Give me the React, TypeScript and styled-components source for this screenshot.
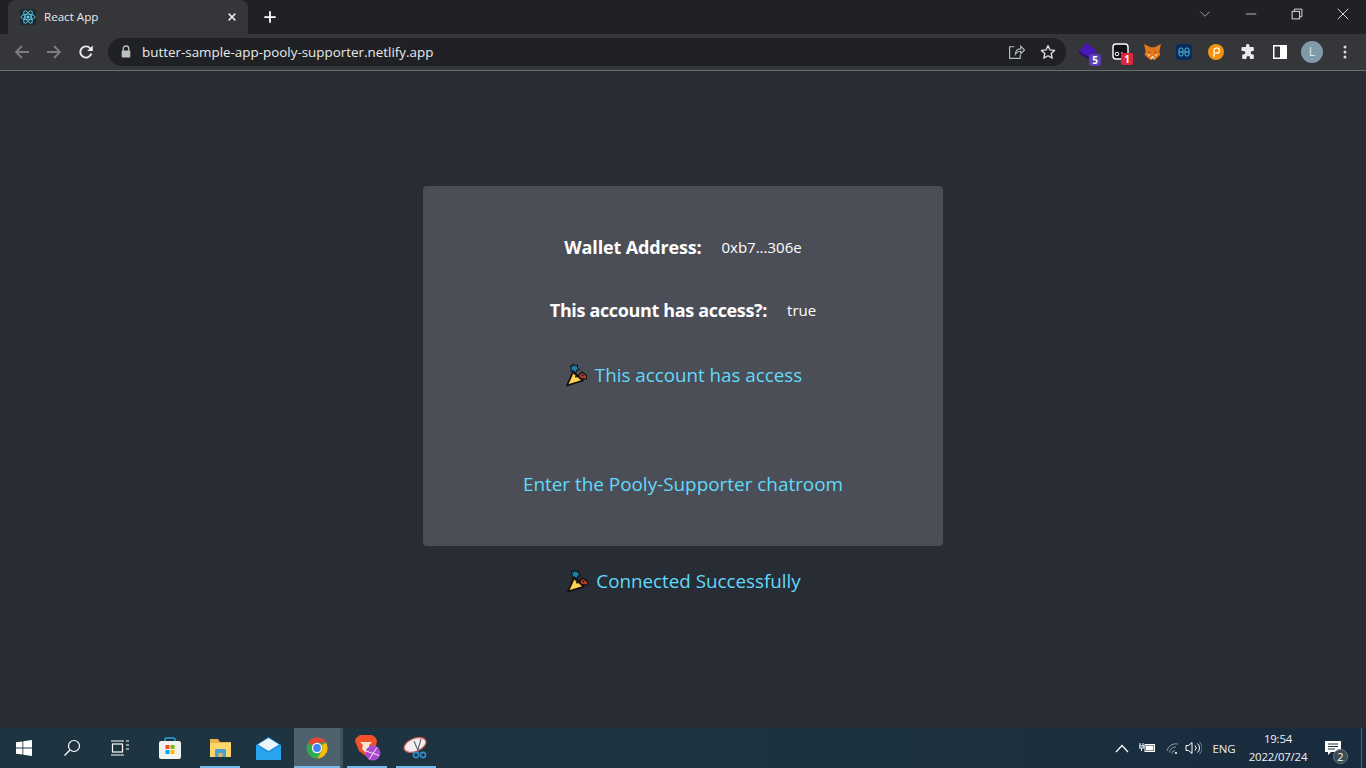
import React from "react";
import styled, { createGlobalStyle } from "styled-components";

const UI = `"Open Sans", "Noto Sans", "Liberation Sans", sans-serif`;

const Global = createGlobalStyle`
  html, body { margin: 0; padding: 0; background: #282c34; overflow: hidden; }
  * { box-sizing: border-box; }
  #root { width: 1366px; height: 768px; }
`;

const Screen = styled.div`
  width: 1366px; height: 768px; display: flex; flex-direction: column; font-family: ${UI};
`;
const TabStrip = styled.header`
  height: 34px; background: #202124; display: flex; align-items: flex-end; padding-left: 8px;
`;
const Tab = styled.div`
  width: 240px; height: 34px; background: #35363a; border-radius: 8px 8px 0 0; display: flex; align-items: center;
  padding: 0 8px 1px 12px; color: #e8eaed; font-size: 11.6px; gap: 8px;
`;
const TabTitle = styled.span`flex: 1; white-space: nowrap;`;
const IconSlot = styled.span<{ $w?: number }>`
  width: ${(p) => p.$w ?? 32}px; flex: none; display: flex; align-items: center; justify-content: center; position: relative;
`;
const NewTab = styled.div`margin-left: 6px; width: 32px; height: 34px; display: flex; align-items: center; justify-content: center;`;
const Spacer = styled.div`flex: 1;`;
const WindowControls = styled.div`display: flex; align-self: flex-start; align-items: center;`;
const WinBtn = styled.div`width: 46px; height: 28px; display: flex; align-items: center; justify-content: center;`;

const Toolbar = styled.div`
  height: 37px; background: #35363a; border-bottom: 1px solid #6b6d70; display: flex; align-items: center; padding-left: 6px; padding-bottom: 1px;
`;
const Omnibox = styled.div`
  margin-left: 6px; width: 958px; height: 28px; border-radius: 14px; background: #202124; display: flex; align-items: center; padding: 0 2px 0 12px; color: #e8eaed;
`;
const Url = styled.span`flex: 1; margin-left: 10px; font-size: 13.4px; white-space: nowrap; position: relative; top: 0.5px;`;
const Extensions = styled.div`margin-left: 6px; display: flex; align-items: center;`;
const Badge = styled.span<{ $bg: string }>`
  position: absolute; right: 3px; bottom: -5px; width: 12px; height: 12px; border-radius: 2px; background: ${(p) => p.$bg}; color: #fff;
  font-size: 10px; font-weight: 700; line-height: 12px; text-align: center;
`;
const Avatar = styled.div`
  width: 22px; height: 22px; border-radius: 50%; background: #7f9aa8; color: #dfe7ec; font-size: 12px; line-height: 22px; text-align: center;
`;

const Page = styled.main`
  flex: 1; background: #282c34; display: flex; flex-direction: column; align-items: center; padding-top: 115px; color: #fff;
`;
const Card = styled.section`
  width: 520px; height: 360px; background: #4b4e57; border-radius: 4px; display: flex; flex-direction: column; align-items: center; padding-top: 47px;
`;
const InfoRow = styled.div`
  height: 28px; display: flex; align-items: center; gap: 20px; margin-bottom: 35px;
`;
const InfoLabel = styled.span<{ $track: number }>`
  font-size: 18px; font-weight: 700; letter-spacing: ${(p) => p.$track}px; white-space: nowrap;
`;
const InfoValue = styled.span`font-size: 15px; white-space: nowrap;`;
const Status = styled.div`
  display: flex; align-items: center; gap: 8px; height: 28px; color: #61dafb; font-size: 18.8px; white-space: nowrap; margin-top: 2px;
`;
const RoomLink = styled.a`
  margin-top: 81px; height: 28px; line-height: 28px; color: #61dafb; font-size: 18.9px; white-space: nowrap;
`;
const Connected = styled(Status)`margin-top: 21px;`;

const Taskbar = styled.footer`
  height: 40px; background: linear-gradient(90deg, #1e3440 0%, #1d3340 50%, #192b3e 100%); display: flex; align-items: stretch; color: #fff;
`;
const TaskBtn = styled.div<{ $w?: number; $open?: boolean; $active?: boolean }>`
  width: ${(p) => p.$w ?? 48}px; flex: none; display: flex; align-items: center; justify-content: center; position: relative;
  background: ${(p) => (p.$active ? "#4d626c" : "transparent")};
  &::after {
    content: ""; display: ${(p) => (p.$open ? "block" : "none")}; position: absolute; bottom: 0;
    left: ${(p) => (p.$active ? 0 : 4)}px; right: ${(p) => (p.$active ? 0 : 4)}px; height: 2px; background: #76b9ed;
  }
`;
const TaskGap = styled.div<{ $w: number }>`width: ${(p) => p.$w}px; flex: none;`;
const TaskDivider = styled.div`width: 3px; flex: none; background: #40535d;`;
const Tray = styled.div`margin-left: auto; display: flex; align-items: center; padding-right: 13px; position: relative;`;
const TrayLabel = styled.span`width: 43px; padding-left: 5px; text-align: center; font-size: 11.4px; color: #e8eef2;`;
const Clock = styled.div`
  width: 70px; text-align: center; font-size: 11.4px; line-height: 18px; color: #eef2f4; letter-spacing: -0.2px; white-space: nowrap;
`;
const ClockLine = styled.div`height: 18px;`;
const Notif = styled.div`width: 40px; height: 40px; display: flex; align-items: center; justify-content: center; position: relative;`;
const NotifCount = styled.span`
  position: absolute; left: 20px; top: 21px; width: 15px; height: 15px; border-radius: 50%; background: #3c4a52; border: 1px solid #6b7a83; color: #fff;
  font-size: 11px; line-height: 13px; text-align: center;
`;
const EdgeLine = styled.div`width: 1px; background: #50626d; position: absolute; right: 4px; top: 0; bottom: 0;`;

const Stroke: React.FC<React.SVGProps<SVGSVGElement> & { s?: number }> = ({ s = 16, children, ...r }) => (
  <svg width={s} height={s} viewBox="0 0 16 16" fill="none" stroke="currentColor" strokeWidth={1.5} {...r}>{children}</svg>
);

const ReactLogo = () => (
  <svg width="16" height="16" viewBox="0 0 16 16">
    <rect width="16" height="16" rx="1" fill="#1f2a30" />
    <g fill="none" stroke="#61dafb" strokeWidth="0.8">
      <ellipse cx="8" cy="8" rx="7" ry="2.8" />
      <ellipse cx="8" cy="8" rx="7" ry="2.8" transform="rotate(60 8 8)" />
      <ellipse cx="8" cy="8" rx="7" ry="2.8" transform="rotate(120 8 8)" />
    </g>
    <circle cx="8" cy="8" r="1.5" fill="#61dafb" />
  </svg>
);

const Popper = () => (
  <svg width="23" height="24" viewBox="0 0 23 24">
    <path d="M3 22.500 L9 9 L19 17.500 Z" fill="#f9b93c" stroke="#0d0d0d" strokeWidth="1.700" strokeLinejoin="round" />
    <path d="M5.500 20 L9.500 12 L15.500 17.500 Z" fill="#fcd25a" />
    <path transform="translate(-3 -1)" d="M12 1.800 L14 3.500 L16.800 3 L16.300 5.300 L18.500 7.500 L15.800 8 L14.800 11 L12.500 8.800 L9.800 9.300 L10.300 6.500 L9.200 3.500 L12 4.200 Z" fill="#1d7fa6" stroke="#0d0d0d" strokeWidth="1" />
    <path d="M14 13 L18 9 L22.500 12.500 L22.800 16 L17 15.500 Z" fill="#b5432c" stroke="#0d0d0d" strokeWidth="1.100" />
    <circle cx="12" cy="13.500" r="1" fill="#0d0d0d" />
    <circle cx="18.500" cy="12.500" r="0.900" fill="#0d0d0d" />
  </svg>
);

const Chrome = () => (
  <svg width="22" height="22" viewBox="0 0 24 24">
    <circle cx="12" cy="12" r="11.500" fill="#34a853" />
    <path d="M12 .5a11.500 11.500 0 0 1 10 5.800H12A5.700 5.700 0 0 0 7 9.300L2.100 6.200A11.500 11.500 0 0 1 12 .5z" fill="#ea4335" />
    <path d="M22 6.300A11.500 11.500 0 0 1 12.500 23.500l4.400-8.300A5.700 5.700 0 0 0 17 9z" fill="#fbbc05" />
    <circle cx="12" cy="12" r="5.600" fill="#fff" />
    <circle cx="12" cy="12" r="4.300" fill="#4285f4" />
  </svg>
);

const App: React.FC = () => (
  <Screen>
    <Global />
    <TabStrip>
      <Tab>
        <ReactLogo />
        <TabTitle>React App</TabTitle>
        <IconSlot $w={16}>
          <Stroke s={12} strokeWidth={2} style={{ color: "#e8eaed" }}><path d="M3.500 3.500l9 9M12.500 3.500l-9 9" /></Stroke>
        </IconSlot>
      </Tab>
      <NewTab>
        <Stroke s={14} style={{ color: "#fff" }} strokeWidth={2}><path d="M8 1.500v13M1.500 8h13" /></Stroke>
      </NewTab>
      <Spacer />
      <WindowControls>
        <WinBtn>
          <Stroke s={12} style={{ color: "#c8cacc" }} strokeWidth={1}><path d="M2 5l6 6 6-6" /></Stroke>
        </WinBtn>
        <WinBtn>
          <Stroke s={12} style={{ color: "#e8eaed" }} strokeWidth={1}><path d="M1 8h14" /></Stroke>
        </WinBtn>
        <WinBtn>
          <Stroke s={12} style={{ color: "#e8eaed" }} strokeWidth={1.2}><rect x="1.500" y="4.500" width="10" height="10" /><path d="M4.500 4V1.500h10v10H12" /></Stroke>
        </WinBtn>
        <WinBtn>
          <Stroke s={12} style={{ color: "#e8eaed" }} strokeWidth={1.2}><path d="M1 1l14 14M15 1L1 15" /></Stroke>
        </WinBtn>
      </WindowControls>
    </TabStrip>
    <Toolbar>
      <IconSlot>
        <Stroke style={{ color: "#7c7e81" }} strokeWidth={1.8}><path d="M15 8H2M8 2L2 8l6 6" /></Stroke>
      </IconSlot>
      <IconSlot>
        <Stroke style={{ color: "#7c7e81" }} strokeWidth={1.8}><path d="M1 8h13M8 2l6 6-6 6" /></Stroke>
      </IconSlot>
      <IconSlot>
        <Stroke style={{ color: "#e8eaed" }} strokeWidth={1.9}>
          <path d="M13.300 9.600A5.600 5.600 0 1 1 12 4.100L13.800 6" />
          <path d="M14.800 1.400v5.600H9.200z" fill="currentColor" stroke="none" />
        </Stroke>
      </IconSlot>
      <Omnibox>
        <svg width="12" height="13" viewBox="0 0 12 13"><path d="M3.200 6V3.800a2.800 2.800 0 0 1 5.600 0V6" fill="none" stroke="#bdc1c6" strokeWidth="1.300" /><rect x="1.700" y="5.500" width="8.600" height="7" rx="1" fill="#bdc1c6" /></svg>
        <Url>butter-sample-app-pooly-supporter.netlify.app</Url>
        <IconSlot>
          <Stroke s={17} style={{ color: "#b5b8bc" }} strokeWidth={1.1}><path d="M6 3.500H1.500v11h10V11" /><path d="M7 10.500c0-3.500 2-5 5-5V3l3.500 3.700L12 10V7.800c-2 0-3.800.8-5 2.700z" /></Stroke>
        </IconSlot>
        <IconSlot>
          <Stroke s={16} style={{ color: "#e0e2e5" }} strokeWidth={1.3}><path d="M8 1.600l2 4.300 4.600.5-3.400 3.100 1 4.600L8 11.800l-4.200 2.300 1-4.600L1.400 6.400 6 5.900z" strokeLinejoin="round" /></Stroke>
        </IconSlot>
      </Omnibox>
      <Extensions>
        <IconSlot>
          <svg width="20" height="18" viewBox="0 0 20 18"><path d="M8.500 0L19 8 12 14.500 1 8z" fill="#4a18b8" /><path d="M1 8l11 6.500v2.500L1 10.500z" fill="#2d0e78" /></svg>
          <Badge $bg="#5b3fb0">5</Badge>
        </IconSlot>
        <IconSlot>
          <svg width="17" height="17" viewBox="0 0 17 17"><rect x="1" y="1" width="15" height="15" rx="3" fill="#111" stroke="#fff" strokeWidth="1.400" /><circle cx="5" cy="11" r="1.800" fill="none" stroke="#fff" /><circle cx="10" cy="10" r="1.200" fill="#777" /></svg>
          <Badge $bg="#e0243c">1</Badge>
        </IconSlot>
        <IconSlot>
          <svg width="19" height="18" viewBox="0 0 18 17">
            <path d="M1 1l6 3h4l6-3-1.500 7 1 3-3.500 3.500-2 1.500H7L5 14.500 1.500 11l1-3z" fill="#e2761b" />
            <path d="M4 10l3 1-1.500 2zM14 10l-3 1 1.500 2z" fill="#f6c9a0" />
            <path d="M7.200 14l1.800-2 1.800 2-1 1.700H8.200z" fill="#f5e3d0" />
            <path d="M8.300 14.500h1.400v1.200H8.300z" fill="#2a2a2a" />
            <path d="M5 8l2 .5-1 1zM13 8l-2 .5 1 1z" fill="#233447" />
          </svg>
        </IconSlot>
        <IconSlot>
          <svg width="18" height="18" viewBox="0 0 18 18"><rect x="1" y="1" width="16" height="16" rx="2" fill="#0c2c5e" /><g fill="none" stroke="#4cc3e8" strokeWidth="1"><rect x="4" y="5" width="4" height="8" rx="1.800" /><rect x="10" y="5" width="4" height="8" rx="1.800" /><path d="M4 9h4M10 9h4" /></g></svg>
        </IconSlot>
        <IconSlot>
          <svg width="16" height="16" viewBox="0 0 16 16"><circle cx="8" cy="8" r="8" fill="#f5930f" /><path d="M6 13V6.500a2.700 2.700 0 1 1 2.700 2.700H7" fill="none" stroke="#fff" strokeWidth="1.300" /></svg>
        </IconSlot>
        <IconSlot>
          <svg width="16" height="16" viewBox="0 0 16 16"><path d="M6 1.500a1.800 1.800 0 0 1 3.500 0V3h3.500a.8.8 0 0 1 .8.8V7h-1.300a1.800 1.800 0 0 0 0 3.600h1.300v3.600a.8.8 0 0 1-.8.8H10v-1.300a1.800 1.800 0 0 0-3.600 0V15H3a.8.8 0 0 1-.8-.8V10.500h1.300a1.800 1.800 0 0 0 0-3.600H1.500V3.800A.8.8 0 0 1 2.300 3H6z" fill="#e8eaed" /></svg>
        </IconSlot>
        <IconSlot>
          <svg width="14" height="14" viewBox="0 0 14 14"><rect x="0.750" y="0.750" width="12.500" height="12.500" fill="none" stroke="#fff" strokeWidth="1.500" /><rect x="7" y="1" width="6" height="12" fill="#fff" /></svg>
        </IconSlot>
        <IconSlot><Avatar>L</Avatar></IconSlot>
        <IconSlot $w={34}>
          <svg width="4" height="14" viewBox="0 0 4 14"><circle cx="2" cy="2" r="1.500" fill="#dadce0" /><circle cx="2" cy="7" r="1.500" fill="#dadce0" /><circle cx="2" cy="12" r="1.500" fill="#dadce0" /></svg>
        </IconSlot>
      </Extensions>
    </Toolbar>
    <Page>
      <Card>
        <InfoRow>
          <InfoLabel $track={-0.15}>Wallet Address:</InfoLabel>
          <InfoValue>0xb7...306e</InfoValue>
        </InfoRow>
        <InfoRow>
          <InfoLabel $track={-0.35}>This account has access?:</InfoLabel>
          <InfoValue>true</InfoValue>
        </InfoRow>
        <Status><Popper />This account has access</Status>
        <RoomLink>Enter the Pooly-Supporter chatroom</RoomLink>
      </Card>
      <Connected><Popper />Connected Successfully</Connected>
    </Page>
    <Taskbar>
      <TaskBtn>
        <svg width="16" height="16" viewBox="0 0 16 16" fill="#fff"><path d="M0 2.300l6.500-.9v6.200H0zM7.300 1.300L16 0v7.600H7.300zM0 8.400h6.500v6.200L0 13.700zM7.300 8.400H16V16l-8.700-1.200z" /></svg>
      </TaskBtn>
      <TaskBtn>
        <svg width="18" height="18" viewBox="0 0 18 18" fill="none" stroke="#fff" strokeWidth="1.200"><circle cx="11" cy="7" r="5.500" /><path d="M7 11l-5.500 5.500" /></svg>
      </TaskBtn>
      <TaskBtn>
        <svg width="18" height="16" viewBox="0 0 18 16" fill="none" stroke="#fff" strokeWidth="1.200"><rect x="1.500" y="4" width="10" height="8" /><path d="M0 1h13M0 15h13M15 1h3M15 5h3M15 9h3" /></svg>
      </TaskBtn>
      <TaskGap $w={2} />
      <TaskBtn>
        <svg width="24" height="24" viewBox="0 0 24 24">
          <path d="M7 6V3.500a1.500 1.500 0 0 1 1.500-1.500h7A1.500 1.500 0 0 1 17 3.500V6" fill="none" stroke="#29a5d8" strokeWidth="1.500" />
          <rect x="1" y="5" width="22" height="18" rx="2" fill="#f2f2f2" />
          <rect x="7.500" y="9" width="4" height="4" fill="#f25022" /><rect x="12.500" y="9" width="4" height="4" fill="#7fba00" />
          <rect x="7.500" y="14" width="4" height="4" fill="#00a4ef" /><rect x="12.500" y="14" width="4" height="4" fill="#ffb900" />
        </svg>
      </TaskBtn>
      <TaskGap $w={2} />
      <TaskBtn $open>
        <svg width="23" height="20" viewBox="0 0 23 20">
          <path d="M1 1h8l2 3h11v15H1z" fill="#e8b54a" /><path d="M1 5h21v14H1z" fill="#fbd76c" />
          <rect x="6" y="11" width="11" height="8" rx="1" fill="#4a9fd6" /><rect x="9.500" y="15" width="4" height="4" fill="#e8b54a" />
        </svg>
      </TaskBtn>
      <TaskBtn>
        <svg width="25" height="23" viewBox="0 0 25 23">
          <path d="M12.500 0L25 8v15H0V8z" fill="#1f8fe0" /><path d="M2 7.500L12.500 1 23 7.500 12.500 14z" fill="#eaf5fc" /><path d="M0 8l12.500 8L25 8v15H0z" fill="#2aa4ee" />
        </svg>
      </TaskBtn>
      <TaskGap $w={2} />
      <TaskBtn $w={46} $open $active><Chrome /></TaskBtn>
      <TaskDivider />
      <TaskBtn $open>
        <svg width="28" height="28" viewBox="-2 0 28 28">
          <path d="M1 4l4-3h12l4 3 1 3-2 10-8 6-8-6L0 7z" fill="#f0502a" />
          <path d="M5 8h12l-3 3 1 4-4 4-4-4 1-4z" fill="#fbe3d6" />
          <circle cx="18" cy="19" r="7.500" fill="#a94bd0" />
          <path d="M11 17l13 4.500M14 25.500l8-12" stroke="#f3dff8" strokeWidth="1" />
        </svg>
      </TaskBtn>
      <TaskGap $w={1} />
      <TaskBtn $open>
        <svg width="26" height="24" viewBox="0 0 26 24">
          <ellipse cx="12" cy="9" rx="11.500" ry="6.500" transform="rotate(-22 12 9)" fill="#f4eeee" stroke="#d45a5a" strokeWidth="1.200" />
          <path d="M11 5l5 12M18 3l-4 14" stroke="#5a6570" strokeWidth="1.100" />
          <circle cx="13" cy="19" r="2.600" fill="none" stroke="#2f8fc9" strokeWidth="1.600" /><circle cx="20" cy="19" r="2.600" fill="none" stroke="#2f8fc9" strokeWidth="1.600" />
        </svg>
      </TaskBtn>
      <Tray>
        <IconSlot $w={24}>
          <svg width="14" height="9" viewBox="0 0 14 9" fill="none" stroke="#fff" strokeWidth="1.200"><path d="M1 8l6-6.500L13 8" /></svg>
        </IconSlot>
        <IconSlot $w={26}>
          <svg width="17" height="12" viewBox="0 0 17 12" fill="none" stroke="#fff"><path d="M1 1v3M4 1v3M0 4h5v2H0zM2.500 6v3" /><rect x="6" y="2.500" width="9.500" height="7" /><rect x="7.500" y="4" width="6.500" height="4" fill="#fff" /></svg>
        </IconSlot>
        <IconSlot $w={26}>
          <svg width="14" height="13" viewBox="0 0 14 13" fill="none" stroke="#8d9aa2"><path d="M1 9a9 9 0 0 1 11-7M3.500 10.500a6 6 0 0 1 6.500-5.500M6 11.500a3 3 0 0 1 3-3" /><circle cx="10" cy="11" r="1.100" fill="#fff" stroke="none" /></svg>
        </IconSlot>
        <IconSlot $w={14}>
          <svg width="17" height="14" viewBox="0 0 17 14" fill="none" stroke="#fff" style={{ flex: "none" }}><path d="M1 4.500h2.500L7 1.500v11l-3.500-3H1z" /><path d="M10 4.500a3.500 3.500 0 0 1 0 5M12.500 2.500a6 6 0 0 1 0 9" /><path d="M14.500 1a8 8 0 0 1 0 12" stroke="#778690" /></svg>
        </IconSlot>
        <TrayLabel>ENG</TrayLabel>
        <Clock><ClockLine>19:54</ClockLine><ClockLine>2022/07/24</ClockLine></Clock>
        <Notif>
          <svg width="16" height="15" viewBox="0 0 16 15"><path d="M0 0h16v11H6l-3 3v-3H0z" fill="#fff" /><path d="M3 3h10M3 5.500h10M3 8h7" stroke="#1d3340" /></svg>
          <NotifCount>2</NotifCount>
        </Notif>
        <EdgeLine />
      </Tray>
    </Taskbar>
  </Screen>
);

export default App;
